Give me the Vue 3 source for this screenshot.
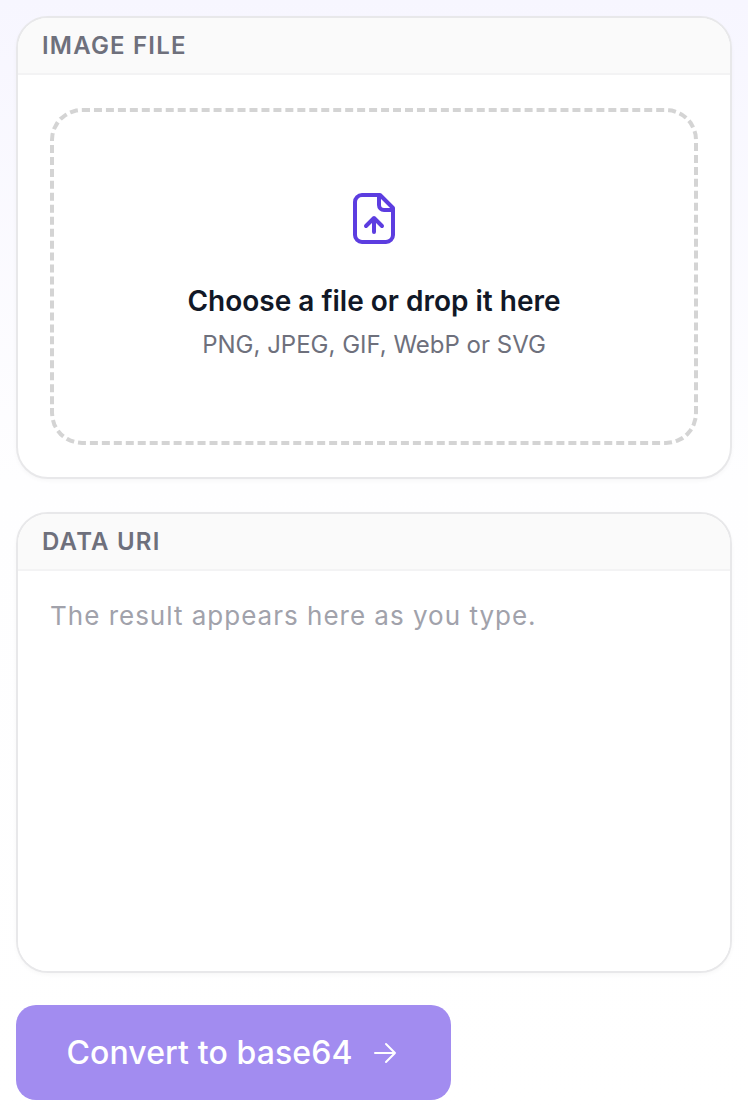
<template>
  <div class="page">
    <section class="card">
      <header class="card-head">Image file</header>
      <div class="card-body">
        <label class="dropzone">
          <input class="file-input" type="file" accept="image/*" />
          <svg class="upload-icon" viewBox="0 0 42 51" fill="none" stroke="currentColor" stroke-width="4" stroke-linecap="round" stroke-linejoin="round">
            <path d="M27 2H9a7 7 0 0 0-7 7v33a7 7 0 0 0 7 7h24a7 7 0 0 0 7-7V15L27 2z" />
            <path d="M26 3v9a5 5 0 0 0 5 5h9" />
            <path d="M21 39V26M13 33l8-8 8 8" />
          </svg>
          <span class="drop-title">Choose a file or drop it here</span>
          <span class="drop-hint">PNG, JPEG, GIF, WebP or SVG</span>
        </label>
      </div>
    </section>

    <section class="card">
      <header class="card-head">Data URI</header>
      <textarea v-model="result" class="output" readonly placeholder="The result appears here as you type."></textarea>
    </section>

    <button class="convert" type="button" disabled>
      Convert to base64
      <svg class="arrow" viewBox="0 0 24 24" fill="none" stroke="currentColor" stroke-width="2" stroke-linecap="round" stroke-linejoin="round">
        <path d="M2 12h20M13 3l9 9-9 9" />
      </svg>
    </button>
  </div>
</template>

<script setup>
import { ref } from 'vue'

const result = ref('')
</script>

<style>
body {
  background: #fff;
}
</style>

<style scoped>
.page {
  box-sizing: border-box;
  width: 748px;
  height: 1116px;
  overflow: hidden;
  padding: 16px;
  display: flex;
  flex-direction: column;
  background: linear-gradient(180deg, #f7f6ff 0, #fefeff 480px, #fff 100%);
  font-family: Inter, "Liberation Sans", sans-serif;
}

.card {
  flex: none;
  box-sizing: border-box;
  width: 716px;
  background: #fff;
  border: 2px solid #e8e8ea;
  border-radius: 32px;
  box-shadow: 0 2px 4px rgba(0, 0, 0, 0.03);
  overflow: hidden;
}

.card + .card {
  margin-top: 33px;
}

.card-head {
  box-sizing: border-box;
  height: 57px;
  padding: 0 24px;
  display: flex;
  align-items: center;
  background: #fafafa;
  border-bottom: 2px solid #f3f3f4;
  color: #6e707c;
  font-size: 24px;
  font-weight: 600;
  letter-spacing: 1.2px;
  text-transform: uppercase;
}

.card-body {
  padding: 33px 32px 32px;
}

.dropzone {
  box-sizing: border-box;
  height: 337px;
  display: flex;
  flex-direction: column;
  align-items: center;
  border: 4px dashed #d4d4d4;
  border-radius: 32px;
}

.file-input {
  display: none;
}

.upload-icon {
  flex: none;
  width: 42px;
  height: 51px;
  margin-top: 81px;
  color: #5c3de0;
}

.drop-title {
  margin-top: 39px;
  color: #111827;
  font-size: 28px;
  line-height: 36px;
  font-weight: 600;
}

.drop-hint {
  margin-top: 9px;
  color: #6e707c;
  font-size: 24px;
  line-height: 34px;
}

.output {
  box-sizing: border-box;
  display: block;
  width: 100%;
  height: 400px;
  padding: 27px 32px;
  border: 0;
  outline: 0;
  resize: none;
  background: #fff;
  font-family: inherit;
  font-size: 26px;
  line-height: 36px;
  letter-spacing: 1px;
}

.output::placeholder {
  color: #a1a2ab;
  opacity: 1;
}

.convert {
  flex: none;
  box-sizing: border-box;
  width: 435px;
  height: 95px;
  margin-top: 32px;
  padding: 0 4px 0 0;
  display: flex;
  align-items: center;
  justify-content: center;
  gap: 20px;
  background: #a28cf0;
  border: 0;
  border-radius: 20px;
  color: #fff;
  font-family: inherit;
  font-size: 32px;
  font-weight: 500;
  letter-spacing: 0.1px;
}

.arrow {
  width: 24px;
  height: 24px;
}
</style>
